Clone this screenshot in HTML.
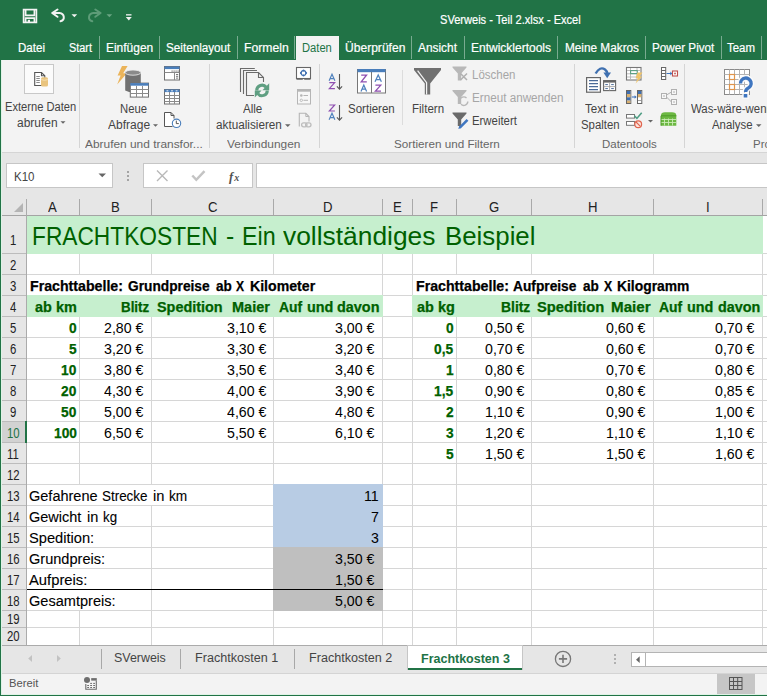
<!DOCTYPE html>
<html><head><meta charset="utf-8"><style>
html,body{margin:0;padding:0;}
body{width:767px;height:696px;position:relative;overflow:hidden;background:#fff;font-family:"Liberation Sans",sans-serif;}
.t{position:absolute;white-space:pre;transform-origin:0 0;font-family:"Liberation Sans",sans-serif;}
svg{overflow:visible}
</style></head><body>
<div style="position:absolute;left:0px;top:0px;width:767px;height:60px;background:#217346;"></div>
<div style="position:absolute;left:0px;top:60px;width:767px;height:93px;background:#f3f3f3;"></div>
<div style="position:absolute;left:0px;top:152px;width:767px;height:1px;background:#d5d5d5;"></div>
<div style="position:absolute;left:0px;top:153px;width:767px;height:63px;background:#e6e6e6;"></div>
<div style="position:absolute;left:99px;top:36px;width:1px;height:23px;background:rgba(255,255,255,0.4);"></div>
<div style="position:absolute;left:159px;top:36px;width:1px;height:23px;background:rgba(255,255,255,0.4);"></div>
<div style="position:absolute;left:237px;top:36px;width:1px;height:23px;background:rgba(255,255,255,0.4);"></div>
<div style="position:absolute;left:294px;top:36px;width:1px;height:23px;background:rgba(255,255,255,0.4);"></div>
<div style="position:absolute;left:411px;top:36px;width:1px;height:23px;background:rgba(255,255,255,0.4);"></div>
<div style="position:absolute;left:464px;top:36px;width:1px;height:23px;background:rgba(255,255,255,0.4);"></div>
<div style="position:absolute;left:557px;top:36px;width:1px;height:23px;background:rgba(255,255,255,0.4);"></div>
<div style="position:absolute;left:645px;top:36px;width:1px;height:23px;background:rgba(255,255,255,0.4);"></div>
<div style="position:absolute;left:721px;top:36px;width:1px;height:23px;background:rgba(255,255,255,0.4);"></div>
<div style="position:absolute;left:761px;top:36px;width:1px;height:23px;background:rgba(255,255,255,0.4);"></div>
<div style="position:absolute;left:296px;top:36px;width:43px;height:24px;background:#f3f3f3;"></div>
<div style="position:absolute;left:1px;top:216px;width:766px;height:429px;background:#ffffff;"></div>
<div style="position:absolute;left:27px;top:216px;width:736px;height:38px;background:#c6efce;"></div>
<div style="position:absolute;left:27px;top:296px;width:356px;height:21px;background:#c6efce;"></div>
<div style="position:absolute;left:413px;top:296px;width:350px;height:21px;background:#c6efce;"></div>
<div style="position:absolute;left:274px;top:485px;width:109px;height:63px;background:#b8cce4;"></div>
<div style="position:absolute;left:274px;top:548px;width:109px;height:63px;background:#bfbfbf;"></div>
<div style="position:absolute;left:27px;top:253px;width:740px;height:1px;background:#d6d6d6;"></div>
<div style="position:absolute;left:27px;top:274px;width:740px;height:1px;background:#d6d6d6;"></div>
<div style="position:absolute;left:27px;top:295px;width:740px;height:1px;background:#d6d6d6;"></div>
<div style="position:absolute;left:27px;top:316px;width:740px;height:1px;background:#d6d6d6;"></div>
<div style="position:absolute;left:27px;top:337px;width:740px;height:1px;background:#d6d6d6;"></div>
<div style="position:absolute;left:27px;top:358px;width:740px;height:1px;background:#d6d6d6;"></div>
<div style="position:absolute;left:27px;top:379px;width:740px;height:1px;background:#d6d6d6;"></div>
<div style="position:absolute;left:27px;top:400px;width:740px;height:1px;background:#d6d6d6;"></div>
<div style="position:absolute;left:27px;top:421px;width:740px;height:1px;background:#d6d6d6;"></div>
<div style="position:absolute;left:27px;top:442px;width:740px;height:1px;background:#d6d6d6;"></div>
<div style="position:absolute;left:27px;top:463px;width:740px;height:1px;background:#d6d6d6;"></div>
<div style="position:absolute;left:27px;top:484px;width:740px;height:1px;background:#d6d6d6;"></div>
<div style="position:absolute;left:27px;top:505px;width:740px;height:1px;background:#d6d6d6;"></div>
<div style="position:absolute;left:27px;top:526px;width:740px;height:1px;background:#d6d6d6;"></div>
<div style="position:absolute;left:27px;top:547px;width:740px;height:1px;background:#d6d6d6;"></div>
<div style="position:absolute;left:27px;top:568px;width:740px;height:1px;background:#d6d6d6;"></div>
<div style="position:absolute;left:27px;top:589px;width:740px;height:1px;background:#d6d6d6;"></div>
<div style="position:absolute;left:27px;top:610px;width:740px;height:1px;background:#d6d6d6;"></div>
<div style="position:absolute;left:27px;top:627px;width:740px;height:1px;background:#d6d6d6;"></div>
<div style="position:absolute;left:27px;top:627px;width:740px;height:1px;background:#d6d6d6;"></div>
<div style="position:absolute;left:79px;top:216px;width:1px;height:429px;background:#d6d6d6;"></div>
<div style="position:absolute;left:151px;top:216px;width:1px;height:429px;background:#d6d6d6;"></div>
<div style="position:absolute;left:273px;top:216px;width:1px;height:429px;background:#d6d6d6;"></div>
<div style="position:absolute;left:382px;top:216px;width:1px;height:429px;background:#d6d6d6;"></div>
<div style="position:absolute;left:412px;top:216px;width:1px;height:429px;background:#d6d6d6;"></div>
<div style="position:absolute;left:456px;top:216px;width:1px;height:429px;background:#d6d6d6;"></div>
<div style="position:absolute;left:531px;top:216px;width:1px;height:429px;background:#d6d6d6;"></div>
<div style="position:absolute;left:653px;top:216px;width:1px;height:429px;background:#d6d6d6;"></div>
<div style="position:absolute;left:762px;top:216px;width:1px;height:429px;background:#d6d6d6;"></div>
<div style="position:absolute;left:27px;top:275px;width:355px;height:20px;background:#ffffff;"></div>
<div style="position:absolute;left:413px;top:275px;width:349px;height:20px;background:#ffffff;"></div>
<div style="position:absolute;left:27px;top:485px;width:246px;height:20px;background:#ffffff;"></div>
<div style="position:absolute;left:27px;top:506px;width:124px;height:20px;background:#ffffff;"></div>
<div style="position:absolute;left:27px;top:527px;width:124px;height:20px;background:#ffffff;"></div>
<div style="position:absolute;left:27px;top:548px;width:124px;height:20px;background:#ffffff;"></div>
<div style="position:absolute;left:27px;top:569px;width:124px;height:20px;background:#ffffff;"></div>
<div style="position:absolute;left:27px;top:590px;width:124px;height:20px;background:#ffffff;"></div>
<div style="position:absolute;left:26px;top:215px;width:737px;height:39px;background:#c6efce;"></div>
<div style="position:absolute;left:26px;top:295px;width:357px;height:22px;background:#c6efce;"></div>
<div style="position:absolute;left:412px;top:295px;width:351px;height:22px;background:#c6efce;"></div>
<div style="position:absolute;left:273px;top:484px;width:110px;height:64px;background:#b8cce4;"></div>
<div style="position:absolute;left:273px;top:547px;width:110px;height:64px;background:#bfbfbf;"></div>
<div style="position:absolute;left:27px;top:589px;width:356px;height:1px;background:#000000;"></div>
<div style="position:absolute;left:1px;top:189px;width:766px;height:26px;background:#e6e6e6;"></div>
<div style="position:absolute;left:1px;top:216px;width:25px;height:429px;background:#e6e6e6;"></div>
<div style="position:absolute;left:1px;top:215px;width:766px;height:1px;background:#a4a4a4;"></div>
<div style="position:absolute;left:26px;top:199px;width:1px;height:446px;background:#ababab;"></div>
<div style="position:absolute;left:79px;top:199px;width:1px;height:16px;background:#a9a9a9;"></div>
<div style="position:absolute;left:151px;top:199px;width:1px;height:16px;background:#a9a9a9;"></div>
<div style="position:absolute;left:273px;top:199px;width:1px;height:16px;background:#a9a9a9;"></div>
<div style="position:absolute;left:382px;top:199px;width:1px;height:16px;background:#a9a9a9;"></div>
<div style="position:absolute;left:412px;top:199px;width:1px;height:16px;background:#a9a9a9;"></div>
<div style="position:absolute;left:456px;top:199px;width:1px;height:16px;background:#a9a9a9;"></div>
<div style="position:absolute;left:531px;top:199px;width:1px;height:16px;background:#a9a9a9;"></div>
<div style="position:absolute;left:653px;top:199px;width:1px;height:16px;background:#a9a9a9;"></div>
<div style="position:absolute;left:762px;top:199px;width:1px;height:16px;background:#a9a9a9;"></div>
<div style="position:absolute;left:1px;top:253px;width:25px;height:1px;background:#bcbcbc;"></div>
<div style="position:absolute;left:1px;top:274px;width:25px;height:1px;background:#bcbcbc;"></div>
<div style="position:absolute;left:1px;top:295px;width:25px;height:1px;background:#bcbcbc;"></div>
<div style="position:absolute;left:1px;top:316px;width:25px;height:1px;background:#bcbcbc;"></div>
<div style="position:absolute;left:1px;top:337px;width:25px;height:1px;background:#bcbcbc;"></div>
<div style="position:absolute;left:1px;top:358px;width:25px;height:1px;background:#bcbcbc;"></div>
<div style="position:absolute;left:1px;top:379px;width:25px;height:1px;background:#bcbcbc;"></div>
<div style="position:absolute;left:1px;top:400px;width:25px;height:1px;background:#bcbcbc;"></div>
<div style="position:absolute;left:1px;top:421px;width:25px;height:1px;background:#bcbcbc;"></div>
<div style="position:absolute;left:1px;top:442px;width:25px;height:1px;background:#bcbcbc;"></div>
<div style="position:absolute;left:1px;top:463px;width:25px;height:1px;background:#bcbcbc;"></div>
<div style="position:absolute;left:1px;top:484px;width:25px;height:1px;background:#bcbcbc;"></div>
<div style="position:absolute;left:1px;top:505px;width:25px;height:1px;background:#bcbcbc;"></div>
<div style="position:absolute;left:1px;top:526px;width:25px;height:1px;background:#bcbcbc;"></div>
<div style="position:absolute;left:1px;top:547px;width:25px;height:1px;background:#bcbcbc;"></div>
<div style="position:absolute;left:1px;top:568px;width:25px;height:1px;background:#bcbcbc;"></div>
<div style="position:absolute;left:1px;top:589px;width:25px;height:1px;background:#bcbcbc;"></div>
<div style="position:absolute;left:1px;top:610px;width:25px;height:1px;background:#bcbcbc;"></div>
<div style="position:absolute;left:1px;top:627px;width:25px;height:1px;background:#bcbcbc;"></div>
<div style="position:absolute;left:1px;top:645px;width:25px;height:1px;background:#bcbcbc;"></div>
<div style="position:absolute;left:1px;top:645px;width:766px;height:1px;background:#ababab;"></div>
<svg style="position:absolute;left:14px;top:203px" width="10" height="10"><polygon points="9,0 9,9 0,9" fill="#b4b4b4"/></svg>
<div style="position:absolute;left:1px;top:422px;width:24px;height:20px;background:#d2d2d2;"></div>
<div style="position:absolute;left:25px;top:421px;width:2px;height:22px;background:#217346;"></div>
<svg style="position:absolute;left:0;top:0" width="140" height="35">
<g fill="none" stroke="#f4f4f4" stroke-width="1.7">
<rect x="23.6" y="9.6" width="12.8" height="12.8"/>
<path d="M25.6 9.6 V15.3 H34.4 V9.6"/>
<path d="M25.6 22.4 V18.2 H34.4 V22.4"/>
</g>
<rect x="27.8" y="19.8" width="2.2" height="3" fill="#f4f4f4"/>
<g fill="none" stroke="#f2f2f2" stroke-width="2" stroke-linecap="round" stroke-linejoin="round">
<path d="M53 13 H59.5 A5 4.3 0 0 1 60.5 21.3"/>
<path d="M57.5 9.5 L52.2 13 L57.5 16.8"/>
</g>
<polygon points="71.5,14.3 77.2,14.3 74.35,17.2" fill="#f2f2f2"/>
<g fill="none" stroke="#5d9c78" stroke-width="2" stroke-linecap="round" stroke-linejoin="round">
<path d="M99.8 13 H93.3 A5 4.3 0 0 0 92.3 21.3"/>
<path d="M95.3 9.5 L100.6 13 L95.3 16.8"/>
</g>
<polygon points="106.5,14.3 112.2,14.3 109.35,17.2" fill="#6aa583"/>
<rect x="126" y="14.2" width="5.5" height="1.3" fill="#f2f2f2"/>
<polygon points="125.8,17 131.8,17 128.8,20.6" fill="#f2f2f2"/>
</svg>
<div style="position:absolute;left:79px;top:64px;width:1px;height:84px;background:#d5d5d5;"></div>
<div style="position:absolute;left:209px;top:64px;width:1px;height:84px;background:#d5d5d5;"></div>
<div style="position:absolute;left:319px;top:64px;width:1px;height:84px;background:#d5d5d5;"></div>
<div style="position:absolute;left:574px;top:64px;width:1px;height:84px;background:#d5d5d5;"></div>
<div style="position:absolute;left:684px;top:64px;width:1px;height:84px;background:#d5d5d5;"></div>
<div style="position:absolute;left:402px;top:70px;width:1px;height:55px;background:#dcdcdc;"></div>
<svg style="position:absolute;left:0;top:0;overflow:visible" width="1" height="1"><polygon points="60.5,121.2 65.5,121.2 63.0,123.7" fill="#666"/></svg>
<svg style="position:absolute;left:0;top:0;overflow:visible" width="1" height="1"><polygon points="153,124.3 158,124.3 155.5,126.8" fill="#666"/></svg>
<svg style="position:absolute;left:0;top:0;overflow:visible" width="1" height="1"><polygon points="285,124.3 290.5,124.3 287.75,127.05" fill="#666"/></svg>
<svg style="position:absolute;left:0;top:0;overflow:visible" width="1" height="1"><polygon points="648,120 653,120 650.5,122.5" fill="#666"/></svg>
<svg style="position:absolute;left:0;top:0;overflow:visible" width="1" height="1"><polygon points="756,124.3 761.5,124.3 758.75,127.05" fill="#666"/></svg>
<svg style="position:absolute;left:0;top:0" width="767" height="153">
<!-- Externe Daten box -->
<rect x="24.5" y="64.5" width="29" height="29" fill="#fbfbfb" stroke="#c8c8c8"/>
<path d="M34.7 72.5 H41.5 L44.8 75.8 V85.5 H34.7 Z" fill="#fff" stroke="#555" stroke-width="1.1"/>
<path d="M41.5 72.5 V75.8 H44.8" fill="none" stroke="#555" stroke-width="1.1"/>
<g stroke="#8a8a8a" stroke-width="1"><path d="M36.3 76.5h3.5M36.3 78.5h3.5M36.3 80.5h3.5M36.3 82.5h3.5"/></g>
<rect x="41" y="77.3" width="7" height="9.3" rx="1.5" fill="#e9c47f"/>
<path d="M41.2 79.6 Q44.5 81 47.8 79.6" stroke="#f6e2b8" stroke-width="0.9" fill="none"/>
<!-- Neue Abfrage -->
<path d="M122 66 L127.6 66 L123.2 73.2 L126.8 73.2 L117.2 84.6 L120.6 75.6 L117.6 75.6 Z" fill="#ebb45a"/>
<path d="M125.2 72.5 V90.5 Q132.9 94.5 140.8 90.5 V72.5 Z" fill="#717171"/>
<ellipse cx="133" cy="72.6" rx="7.8" ry="2.6" fill="#8a8a8a" stroke="#f0f0f0" stroke-width="0.8"/>
<rect x="130.3" y="83.1" width="18.2" height="14" fill="#fff" stroke="#6f6f6f"/>
<rect x="130.3" y="83.1" width="18.2" height="2.6" fill="#4a7ebb"/>
<g stroke="#8a8a8a" stroke-width="1"><path d="M130.5 89.5h18M130.5 93.5h18M136.5 86v11M142.5 86v11"/></g>
<!-- small icons col 1 -->
<rect x="164.5" y="66.5" width="15" height="13.5" fill="#fff" stroke="#6f6f6f"/>
<rect x="164.5" y="66.5" width="15" height="2.6" fill="#4a7ebb"/>
<g fill="#777"><rect x="171.5" y="70.5" width="1.2" height="1.2"/><rect x="173.5" y="70.5" width="1.2" height="1.2"/><rect x="175.5" y="70.5" width="1.2" height="1.2"/><rect x="177.5" y="70.5" width="1.2" height="1.2"/>
<rect x="176" y="74" width="2.2" height="1"/><rect x="176" y="75.8" width="2.2" height="1"/><rect x="176" y="77.6" width="2.2" height="1"/></g>
<path d="M164.5 72.5h15M174.5 72.5v7.5" stroke="#8a8a8a"/>
<rect x="164.5" y="89.5" width="15" height="14.5" fill="#fff" stroke="#6f6f6f"/>
<rect x="164.5" y="89.5" width="15" height="2.6" fill="#4a7ebb"/>
<g fill="#fff"><rect x="166.5" y="90.4" width="1.8" height="0.9"/><rect x="171.1" y="90.4" width="1.8" height="0.9"/><rect x="175.7" y="90.4" width="1.8" height="0.9"/></g>
<g stroke="#8a8a8a"><path d="M164.5 95.5h15M164.5 98.5h15M164.5 101.5h15M169.5 92v12M174.5 92v12"/></g>
<path d="M172.5 126.5 H164.5 V112.5 H171 L174 115.5 V118.5" fill="#fff" stroke="#555"/>
<path d="M171 112.5 V115.5 H174" fill="none" stroke="#555"/>
<circle cx="176.5" cy="123.3" r="4.2" fill="#fff" stroke="#4a7ebb" stroke-width="1.1"/>
<path d="M176.3 120.6 V123.6 H178.8" fill="none" stroke="#555" stroke-width="1"/>
<!-- Alle aktualisieren -->
<g fill="none" stroke="#6b6b6b" stroke-width="1.1">
<path d="M240.5 92 V68.5 H254.8"/>
<path d="M243.5 94 V70.5 H257"/>
<path d="M254 95.5 H246.5 V72.5 H258.5 L263.5 77.5 V82"/>
<path d="M258.5 72.5 V77.5 H263.5"/>
</g>

<g fill="none" stroke="#5f9f82" stroke-width="3.1">
<path d="M256.7 90.4 A5.3 5.3 0 0 1 266.2 87.2"/>
<path d="M267.3 90.4 A5.3 5.3 0 0 1 257.8 93.6"/>
</g>
<polygon points="269.2,83.2 269.2,90.2 262.4,90.2" fill="#5f9f82"/>
<polygon points="254.8,97.6 254.8,90.6 261.6,90.6" fill="#5f9f82"/>
<!-- small icons col Verbindungen -->
<rect x="296.5" y="67.5" width="14" height="11" fill="#fff" stroke="#666" stroke-width="1.1"/>
<path d="M296.5 79.3h6.3M304.2 79.3h6.3" stroke="#666" stroke-width="1.1"/>
<circle cx="303.5" cy="73" r="2.4" fill="none" stroke="#3f6fb0" stroke-width="1.1"/>
<g fill="#3f6fb0"><circle cx="303.5" cy="70.4" r="1"/><circle cx="303.5" cy="75.6" r="1"/><circle cx="300.9" cy="73" r="1"/><circle cx="306.1" cy="73" r="1"/></g>
<rect x="297.5" y="89.5" width="13" height="14.5" fill="#f7f7f7" stroke="#b5b5b5"/>
<rect x="297.5" y="89.5" width="13" height="2.2" fill="#b5b5b5"/>
<circle cx="301.3" cy="95.5" r="1.3" fill="#b5b5b5"/><circle cx="301.3" cy="100.3" r="1.2" fill="none" stroke="#b5b5b5" stroke-width="0.9"/>
<path d="M303.5 95.5h4.5M303.5 100.3h4.5" stroke="#b5b5b5"/>
<path d="M299.3 126.5 V113.3 H305.8 L309 116.5 V121.5" fill="none" stroke="#b5b5b5" stroke-width="1.1"/>
<path d="M305.8 113.3 V116.5 H309" fill="none" stroke="#b5b5b5"/>
<g fill="none" stroke="#bdbdbd" stroke-width="1.3"><rect x="301.6" y="122.8" width="5.4" height="4" rx="2"/><rect x="305.6" y="122.8" width="5.4" height="4" rx="2"/></g>
<!-- sort AZ / ZA -->
<g fill="none" stroke-width="1.15" stroke-linejoin="miter">
<path d="M329.1 80.8 L332 74.2 L334.9 80.8 M330.2 78.6 H333.8" stroke="#4f81bd"/>
<path d="M329.3 82.6 H334.7 L329.3 88.6 H334.9" stroke="#8e4fb0"/>
<path d="M329.3 105 H334.7 L329.3 111 H334.9" stroke="#8e4fb0"/>
<path d="M329.1 119.8 L332 113.2 L334.9 119.8 M330.2 117.6 H333.8" stroke="#4f81bd"/>
</g>
<g stroke="#555" stroke-width="1.1" fill="none"><path d="M339.5 74v15M336.9 86.3l2.6 2.8 2.6-2.8"/><path d="M339.5 105v15M336.9 117.3l2.6 2.8 2.6-2.8"/></g>
<!-- sort dialog -->
<rect x="357.5" y="69.5" width="28" height="23.5" fill="#fff" stroke="#777"/>
<rect x="357.5" y="69" width="28" height="3.2" fill="#4a7ebb"/>
<path d="M371.5 72v21" stroke="#777"/>
<g fill="none" stroke-width="1.25">
<path d="M361.2 75 H366.6 L361.2 81.8 H366.8" stroke="#8e4fb0"/>
<path d="M361 91.4 L363.8 85 L366.6 91.4 M362 89.2 H365.6" stroke="#4f81bd"/>
<path d="M375 81.8 L378.2 75 L381.4 81.8 M376 79.6 H380.4" stroke="#4f81bd"/>
<path d="M375.4 85.2 H380.8 L375.4 91.2 H381" stroke="#8e4fb0"/>
</g>
<!-- Filter funnel -->
<path d="M414 68 H441 V70 L430.2 83.5 V94.6 H424.8 V83.5 L414 70 Z" fill="#707070"/>
<path d="M417.6 70.6 L426.6 82.6 V94.6" fill="none" stroke="#f3f3f3" stroke-width="1.2"/>
<!-- small filter icons -->
<path d="M452.5 66.5 H466.5 V67.5 L461.2 73.5 V80.5 H457.8 V73.5 L452.5 67.5 Z" fill="#b8b8b8"/>
<path d="M460.5 73.5l6.5 6.5M467 73.5l-6.5 6.5" stroke="#b0b0b0" stroke-width="1.5"/>
<path d="M452.5 90 H466.5 V91 L461.2 97 V104 H457.8 V97 L452.5 91 Z" fill="#b8b8b8"/>
<g fill="none" stroke="#b8b8b8" stroke-width="1.4"><path d="M459.8 100.5 A4 4 0 0 1 466.5 98"/><path d="M467.8 101.5 A4 4 0 0 1 461 104.3"/></g>
<path d="M452.5 112.5 H466.5 V113.5 L461.2 119.5 V126 H457.8 V119.5 L452.5 113.5 Z" fill="#6a6a6a"/>
<path d="M459.8 127.6 L467.5 119.9" stroke="#3f76c0" stroke-width="2.6"/>
<path d="M458.3 129.1 l1-3 2 2z" fill="#3f76c0"/>
<!-- Text in Spalten -->
<path d="M595.6 73.5 Q600 66 605 69.5 Q607 71 607.3 73.5" fill="none" stroke="#3f70b0" stroke-width="2.4"/>
<polygon points="603.4,72.4 611,72.4 607.2,78.2" fill="#3f70b0"/>
<rect x="586.6" y="77.6" width="13.8" height="14.6" fill="#fff" stroke="#666" stroke-width="1.2"/>
<g stroke="#4a6a98" stroke-width="1.1"><path d="M589 80.6h9M589 83.6h9M589 86.6h9M589 89.6h9"/></g>
<rect x="603.6" y="80.6" width="12" height="10" fill="#fff" stroke="#666" stroke-width="1.1"/>
<rect x="603.6" y="80.6" width="12" height="2" fill="#666"/>
<path d="M609.6 82.6v8M603.6 86.6h12" stroke="#999" stroke-width="0.8"/>
<g stroke="#4a6a98" stroke-width="1"><path d="M605.3 84.6h2.6M611.2 84.6h2.6M605.3 88.6h2.6M611.2 88.6h2.6"/></g>
<!-- Datentools small col1 -->
<rect x="626.5" y="67.5" width="14.5" height="12.5" fill="#fff" stroke="#777" stroke-width="1.1"/>
<g stroke="#b5b5b5" stroke-width="0.9"><path d="M627 70.5h13.5M627 73.8h13.5M627 77h13.5M630.5 68v12M637 68v12"/></g>
<rect x="630.6" y="70.6" width="6.6" height="3" fill="#fff" stroke="#5a9e80" stroke-width="1.1"/>
<path d="M637.5 72.5 L642.5 72.5 L639.6 76.6 L642.2 76.6 L635.6 83.4 L637.8 78.2 L635.6 78.2 Z" fill="#f0c56a"/>
<rect x="626.5" y="90.5" width="4.3" height="13" fill="#fff" stroke="#666"/>
<rect x="627" y="91" width="3.3" height="3" fill="#3f6fb0"/><rect x="627" y="94" width="3.3" height="3.3" fill="#d9b070"/><rect x="627" y="97.3" width="3.3" height="3.3" fill="#3f6fb0"/><rect x="627" y="100.6" width="3.3" height="2.4" fill="#d9b070"/>
<rect x="637.5" y="90.5" width="4.3" height="13" fill="#fff" stroke="#666"/>
<rect x="638" y="91" width="3.3" height="3" fill="#3f6fb0"/><rect x="638" y="94" width="3.3" height="3.3" fill="#d9b070"/>
<path d="M638 100.5h3.3" stroke="#888" stroke-width="0.8"/>
<path d="M631.8 97h4.2" stroke="#3f76c0" stroke-width="1.1"/><polygon points="634.6,95.2 636.6,97 634.6,98.8" fill="#3f76c0"/>
<rect x="626.5" y="114.5" width="8" height="3.6" fill="#fff" stroke="#777"/>
<rect x="626.5" y="121.5" width="8" height="3.8" fill="#fff" stroke="#777"/>
<path d="M634.3 115.8l2.6 2.6 4.8-5.6" stroke="#4f9e84" stroke-width="1.6" fill="none"/>
<circle cx="638.2" cy="124.2" r="3.4" fill="#fbe3dc" stroke="#e0654f" stroke-width="1.2"/>
<path d="M636 122l4.4 4.4" stroke="#e0654f" stroke-width="1.1"/>
<!-- col2 -->
<rect x="661.5" y="67.5" width="4.2" height="12" fill="#fff" stroke="#666"/>
<path d="M661.5 70.5h4.2M661.5 73.5h4.2M661.5 76.5h4.2" stroke="#666"/>
<path d="M666.5 73.5h4.5" stroke="#3f76c0"/><polygon points="670.3,71.6 672.3,73.5 670.3,75.4" fill="#3f76c0"/>
<rect x="672.5" y="71" width="5" height="5" fill="#fff" stroke="#c0504d" stroke-width="1.1"/>
<rect x="674.2" y="72.7" width="1.6" height="1.6" fill="#c0504d"/>
<g fill="#f7f7f7" stroke="#b0b0b0"><rect x="661.5" y="93.5" width="5" height="5"/><rect x="671.5" y="89.5" width="5" height="5"/><rect x="671.5" y="99.5" width="5" height="5"/></g>
<path d="M663 96h2M673 92h2M673 102h2" stroke="#b0b0b0"/>
<path d="M666.5 95l5-3M666.5 97l5 5" stroke="#b0b0b0" fill="none"/>
<path d="M661 115.5 Q661 112.2 665 112.2 H672 Q676.3 112.2 676.3 115.5 V125.7 H661 Z" fill="#6cb842"/>
<path d="M661 125.7 V115.8 H676.3" fill="none" stroke="#4e9a2a" stroke-width="1"/>
<g stroke="#c9eab5" stroke-width="0.9"><path d="M664.5 118.5v7M668.5 118.5v7M672.5 118.5v7M661.5 119.5h14.5M661.5 122.5h14.5"/></g>
<!-- What-if -->
<rect x="724.5" y="69.5" width="25" height="25" fill="#fff" stroke="#8a8a8a"/>
<g stroke="#b4b4b4"><path d="M724.5 74.5h25M724.5 79.5h25M724.5 84.5h25M724.5 89.5h25M729.5 69.5v25M734.5 69.5v25M739.5 69.5v25M744.5 69.5v25"/></g>
<rect x="729.5" y="74.5" width="5" height="5" fill="#fff" stroke="#e0944a" stroke-width="1.2"/>
<rect x="729.5" y="84.5" width="5" height="5" fill="#fff" stroke="#e0944a" stroke-width="1.2"/>
<path d="M740.5 83.5 A5.3 5.3 0 1 1 748 88.2 Q745.6 89.5 745.6 92" fill="none" stroke="#fafafa" stroke-width="6.2"/><rect x="742.3" y="92.7" width="6.6" height="6.2" fill="#fafafa"/><path d="M740.5 83.5 A5.3 5.3 0 1 1 748 88.2 Q745.6 89.5 745.6 92" fill="none" stroke="#3f76c0" stroke-width="3.4"/><rect x="743.7" y="94" width="3.6" height="3.5" fill="#3f76c0"/>
</svg>
<div style="position:absolute;left:6px;top:163px;width:107px;height:25px;background:#c6c6c6;"></div>
<div style="position:absolute;left:7px;top:164px;width:105px;height:23px;background:#ffffff;"></div>
<svg style="position:absolute;left:0;top:0;overflow:visible" width="1" height="1"><polygon points="98.5,173.5 106,173.5 102.25,177.25" fill="#666"/></svg>
<div style="position:absolute;left:127px;top:171px;width:2px;height:2px;background:#a4a4a4;"></div>
<div style="position:absolute;left:127px;top:175px;width:2px;height:2px;background:#a4a4a4;"></div>
<div style="position:absolute;left:127px;top:179px;width:2px;height:2px;background:#a4a4a4;"></div>
<div style="position:absolute;left:143px;top:163px;width:110px;height:25px;background:#c6c6c6;"></div>
<div style="position:absolute;left:144px;top:164px;width:108px;height:23px;background:#ffffff;"></div>
<svg style="position:absolute;left:0;top:0" width="767" height="200">
<path d="M157 170.5l10.5 10.5M167.5 170.5L157 181" stroke="#b8b8b8" stroke-width="1.4"/>
<path d="M192.3 175.5l4 4.3 8.2-8.6" stroke="#c4c4c4" stroke-width="2.5" fill="none"/>
<text x="229" y="180.5" font-family="Liberation Serif" font-style="italic" font-weight="bold" font-size="12.5" fill="#505050">f</text>
<text x="234.3" y="180.8" font-family="Liberation Serif" font-style="italic" font-weight="bold" font-size="10" fill="#505050">x</text>
</svg>
<div style="position:absolute;left:256px;top:163px;width:511px;height:25px;background:#c6c6c6;"></div>
<div style="position:absolute;left:257px;top:164px;width:510px;height:23px;background:#ffffff;"></div>
<div style="position:absolute;left:1px;top:646px;width:766px;height:27px;background:#e6e6e6;"></div>
<div style="position:absolute;left:1px;top:673px;width:766px;height:1px;background:#d4d4d4;"></div>
<svg style="position:absolute;left:0;top:0;overflow:visible" width="1" height="1"><polygon points="0,0 0,0 0.0,0.0" fill="none"/></svg>
<svg style="position:absolute;left:0;top:640" width="767" height="56">
<polygon points="32,15 32,22 28.2,18.5" fill="#c2c2c2"/>
<polygon points="57,15 57,22 60.8,18.5" fill="#c2c2c2"/>
<circle cx="563" cy="18.9" r="7.6" fill="none" stroke="#777" stroke-width="1.3"/>
<path d="M563 14.8v8.2M558.9 18.9h8.2" stroke="#777" stroke-width="1.6"/>
</svg>
<div style="position:absolute;left:101px;top:649px;width:1px;height:20px;background:#a8a8a8;"></div>
<div style="position:absolute;left:180px;top:649px;width:1px;height:20px;background:#a8a8a8;"></div>
<div style="position:absolute;left:294px;top:649px;width:1px;height:20px;background:#a8a8a8;"></div>
<div style="position:absolute;left:407px;top:645px;width:116px;height:25px;background:#c6c6c6;"></div>
<div style="position:absolute;left:408px;top:646px;width:114px;height:24px;background:#ffffff;"></div>
<div style="position:absolute;left:408px;top:668px;width:114px;height:2px;background:#217346;"></div>
<div style="position:absolute;left:614px;top:654px;width:2px;height:2px;background:#b0b0b0;"></div>
<div style="position:absolute;left:614px;top:658px;width:2px;height:2px;background:#b0b0b0;"></div>
<div style="position:absolute;left:614px;top:662px;width:2px;height:2px;background:#b0b0b0;"></div>
<div style="position:absolute;left:631px;top:652px;width:136px;height:15px;background:#b4b4b4;"></div>
<div style="position:absolute;left:632px;top:653px;width:135px;height:13px;background:#ffffff;"></div>
<div style="position:absolute;left:645px;top:653px;width:1px;height:13px;background:#b4b4b4;"></div>
<svg style="position:absolute;left:0;top:0" width="767" height="696"><polygon points="639.7,656.3 639.7,663 636,659.65" fill="#666"/></svg>
<div style="position:absolute;left:1px;top:674px;width:766px;height:21px;background:#f3f3f3;"></div>
<svg style="position:absolute;left:0;top:0" width="767" height="696">
<circle cx="87" cy="680" r="3" fill="#6e6e6e"/>
<rect x="91.2" y="678.1" width="5.6" height="2.5" fill="#6e6e6e"/>
<path d="M85.8 684 V689.3 H96.3 V680.5" fill="none" stroke="#6e6e6e" stroke-width="1.1"/>
<g fill="#6e6e6e"><rect x="90.2" y="682.9" width="1.8" height="1"/><rect x="93.2" y="682.9" width="1.8" height="1"/>
<rect x="87.2" y="685" width="1.8" height="1"/><rect x="90.2" y="685" width="1.8" height="1"/><rect x="93.2" y="685" width="1.8" height="1"/>
<rect x="87.2" y="687" width="1.8" height="1"/><rect x="90.2" y="687" width="1.8" height="1"/><rect x="93.2" y="687" width="1.8" height="1"/></g>
</svg>
<div style="position:absolute;left:717px;top:674px;width:38px;height:21px;background:#c6c6c6;"></div>
<svg style="position:absolute;left:0;top:0" width="767" height="696">
<rect x="729.5" y="677.5" width="12.5" height="12" fill="none" stroke="#555" stroke-width="1"/>
<path d="M733.5 677.5v12M737.7 677.5v12M729.5 681.5h12.5M729.5 685.5h12.5" stroke="#555"/>
</svg>
<div style="position:absolute;left:1px;top:60px;width:1px;height:635px;background:#dff3e6;"></div>
<div style="position:absolute;left:1px;top:694px;width:766px;height:1px;background:#dff3e6;"></div>
<div style="position:absolute;left:0px;top:0px;width:1px;height:696px;background:#217346;"></div>
<div style="position:absolute;left:0px;top:695px;width:767px;height:1px;background:#217346;"></div>
<div class="t" style="left:440.00px;top:14.00px;font-size:12px;line-height:12px;color:#ffffff;-webkit-text-stroke:0.2px #ffffff;transform:scaleX(0.9228)">SVerweis - Teil 2.xlsx - Excel</div>
<div class="t" style="left:17.50px;top:42.00px;font-size:12px;line-height:12px;color:#ffffff;-webkit-text-stroke:0.2px #ffffff;transform:scaleX(0.9617)">Datei</div>
<div class="t" style="left:69.00px;top:42.00px;font-size:12px;line-height:12px;color:#ffffff;-webkit-text-stroke:0.2px #ffffff;transform:scaleX(0.9074)">Start</div>
<div class="t" style="left:106.00px;top:42.00px;font-size:12px;line-height:12px;color:#ffffff;-webkit-text-stroke:0.2px #ffffff;transform:scaleX(0.9957)">Einfügen</div>
<div class="t" style="left:166.00px;top:42.00px;font-size:12px;line-height:12px;color:#ffffff;-webkit-text-stroke:0.2px #ffffff;transform:scaleX(0.9743)">Seitenlayout</div>
<div class="t" style="left:244.00px;top:42.00px;font-size:12px;line-height:12px;color:#ffffff;-webkit-text-stroke:0.2px #ffffff;transform:scaleX(1.0153)">Formeln</div>
<div class="t" style="left:345.00px;top:42.00px;font-size:12px;line-height:12px;color:#ffffff;-webkit-text-stroke:0.2px #ffffff;transform:scaleX(1.0057)">Überprüfen</div>
<div class="t" style="left:418.00px;top:42.00px;font-size:12px;line-height:12px;color:#ffffff;-webkit-text-stroke:0.2px #ffffff;transform:scaleX(0.9896)">Ansicht</div>
<div class="t" style="left:471.00px;top:42.00px;font-size:12px;line-height:12px;color:#ffffff;-webkit-text-stroke:0.2px #ffffff;transform:scaleX(0.9997)">Entwicklertools</div>
<div class="t" style="left:565.00px;top:42.00px;font-size:12px;line-height:12px;color:#ffffff;-webkit-text-stroke:0.2px #ffffff;transform:scaleX(0.9820)">Meine Makros</div>
<div class="t" style="left:652.00px;top:42.00px;font-size:12px;line-height:12px;color:#ffffff;-webkit-text-stroke:0.2px #ffffff;transform:scaleX(0.9739)">Power Pivot</div>
<div class="t" style="left:727.40px;top:42.00px;font-size:12px;line-height:12px;color:#ffffff;-webkit-text-stroke:0.2px #ffffff;transform:scaleX(0.9541)">Team</div>
<div class="t" style="left:301.90px;top:42.00px;font-size:12px;line-height:12px;color:#217346;transform:scaleX(0.9315)">Daten</div>
<div class="t" style="left:48.30px;top:200.00px;font-size:14px;line-height:14px;color:#222222;transform:scaleX(0.9400)">A</div>
<div class="t" style="left:110.80px;top:200.00px;font-size:14px;line-height:14px;color:#222222;transform:scaleX(0.9400)">B</div>
<div class="t" style="left:207.80px;top:200.00px;font-size:14px;line-height:14px;color:#222222;transform:scaleX(0.9400)">C</div>
<div class="t" style="left:322.83px;top:200.00px;font-size:14px;line-height:14px;color:#222222;transform:scaleX(0.9400)">D</div>
<div class="t" style="left:392.80px;top:200.00px;font-size:14px;line-height:14px;color:#222222;transform:scaleX(0.9400)">E</div>
<div class="t" style="left:430.27px;top:200.00px;font-size:14px;line-height:14px;color:#222222;transform:scaleX(0.9400)">F</div>
<div class="t" style="left:489.30px;top:200.00px;font-size:14px;line-height:14px;color:#222222;transform:scaleX(0.9400)">G</div>
<div class="t" style="left:587.80px;top:200.00px;font-size:14px;line-height:14px;color:#222222;transform:scaleX(0.9400)">H</div>
<div class="t" style="left:706.12px;top:200.00px;font-size:14px;line-height:14px;color:#222222;transform:scaleX(0.9400)">I</div>
<div class="t" style="left:9.85px;top:233.00px;font-size:14px;line-height:14px;color:#222222;transform:scaleX(0.8116)">1</div>
<div class="t" style="left:10.25px;top:258.00px;font-size:14px;line-height:14px;color:#222222;transform:scaleX(0.8116)">2</div>
<div class="t" style="left:10.25px;top:279.00px;font-size:14px;line-height:14px;color:#222222;transform:scaleX(0.8116)">3</div>
<div class="t" style="left:10.25px;top:300.00px;font-size:14px;line-height:14px;color:#222222;transform:scaleX(0.8116)">4</div>
<div class="t" style="left:10.25px;top:321.00px;font-size:14px;line-height:14px;color:#222222;transform:scaleX(0.8116)">5</div>
<div class="t" style="left:10.25px;top:342.00px;font-size:14px;line-height:14px;color:#222222;transform:scaleX(0.8116)">6</div>
<div class="t" style="left:10.25px;top:363.00px;font-size:14px;line-height:14px;color:#222222;transform:scaleX(0.8116)">7</div>
<div class="t" style="left:10.25px;top:384.00px;font-size:14px;line-height:14px;color:#222222;transform:scaleX(0.8116)">8</div>
<div class="t" style="left:10.25px;top:405.00px;font-size:14px;line-height:14px;color:#222222;transform:scaleX(0.8116)">9</div>
<div class="t" style="left:6.69px;top:426.00px;font-size:14px;line-height:14px;color:#217346;transform:scaleX(0.8116)">10</div>
<div class="t" style="left:7.11px;top:447.00px;font-size:14px;line-height:14px;color:#222222;transform:scaleX(0.8116)">11</div>
<div class="t" style="left:6.69px;top:468.00px;font-size:14px;line-height:14px;color:#222222;transform:scaleX(0.8116)">12</div>
<div class="t" style="left:6.69px;top:489.00px;font-size:14px;line-height:14px;color:#222222;transform:scaleX(0.8116)">13</div>
<div class="t" style="left:6.69px;top:510.00px;font-size:14px;line-height:14px;color:#222222;transform:scaleX(0.8116)">14</div>
<div class="t" style="left:6.69px;top:531.00px;font-size:14px;line-height:14px;color:#222222;transform:scaleX(0.8116)">15</div>
<div class="t" style="left:6.69px;top:552.00px;font-size:14px;line-height:14px;color:#222222;transform:scaleX(0.8116)">16</div>
<div class="t" style="left:6.69px;top:573.00px;font-size:14px;line-height:14px;color:#222222;transform:scaleX(0.8116)">17</div>
<div class="t" style="left:6.69px;top:594.00px;font-size:14px;line-height:14px;color:#222222;transform:scaleX(0.8116)">18</div>
<div class="t" style="left:6.69px;top:612.00px;font-size:14px;line-height:14px;color:#222222;transform:scaleX(0.8116)">19</div>
<div class="t" style="left:7.09px;top:629.00px;font-size:14px;line-height:14px;color:#222222;transform:scaleX(0.8116)">20</div>
<div class="t" style="left:31.78px;top:224.00px;font-size:25px;line-height:25px;color:#006100;transform:scaleX(0.9089)">FRACHTKOSTEN</div>
<div class="t" style="left:225.51px;top:224.00px;font-size:25px;line-height:25px;color:#006100;transform:scaleX(0.9902)">-</div>
<div class="t" style="left:241.93px;top:224.00px;font-size:25px;line-height:25px;color:#006100;transform:scaleX(0.9329)">Ein</div>
<div class="t" style="left:283.00px;top:224.00px;font-size:25px;line-height:25px;color:#006100;transform:scaleX(1.0546)">vollständiges</div>
<div class="t" style="left:444.73px;top:224.00px;font-size:25px;line-height:25px;color:#006100;transform:scaleX(1.0334)">Beispiel</div>
<div class="t" style="left:29.90px;top:279.00px;font-size:14px;line-height:14px;color:#000000;font-weight:bold;-webkit-text-stroke:0.25px #000000;transform:scaleX(1.0128)">Frachttabelle:</div>
<div class="t" style="left:128.00px;top:279.00px;font-size:14px;line-height:14px;color:#000000;font-weight:bold;-webkit-text-stroke:0.25px #000000;transform:scaleX(0.9802)">Grundpreise</div>
<div class="t" style="left:215.60px;top:279.00px;font-size:14px;line-height:14px;color:#000000;font-weight:bold;-webkit-text-stroke:0.25px #000000;transform:scaleX(0.9692)">ab</div>
<div class="t" style="left:236.20px;top:279.00px;font-size:14px;line-height:14px;color:#000000;font-weight:bold;-webkit-text-stroke:0.25px #000000;transform:scaleX(0.8600)">X</div>
<div class="t" style="left:250.10px;top:279.00px;font-size:14px;line-height:14px;color:#000000;font-weight:bold;-webkit-text-stroke:0.25px #000000;transform:scaleX(1.0088)">Kilometer</div>
<div class="t" style="left:415.90px;top:279.00px;font-size:14px;line-height:14px;color:#000000;font-weight:bold;-webkit-text-stroke:0.25px #000000;transform:scaleX(1.0128)">Frachttabelle:</div>
<div class="t" style="left:513.40px;top:279.00px;font-size:14px;line-height:14px;color:#000000;font-weight:bold;-webkit-text-stroke:0.25px #000000;transform:scaleX(0.9817)">Aufpreise</div>
<div class="t" style="left:582.90px;top:279.00px;font-size:14px;line-height:14px;color:#000000;font-weight:bold;-webkit-text-stroke:0.25px #000000;transform:scaleX(0.9692)">ab</div>
<div class="t" style="left:603.60px;top:279.00px;font-size:14px;line-height:14px;color:#000000;font-weight:bold;-webkit-text-stroke:0.25px #000000;transform:scaleX(0.8700)">X</div>
<div class="t" style="left:617.30px;top:279.00px;font-size:14px;line-height:14px;color:#000000;font-weight:bold;-webkit-text-stroke:0.25px #000000;transform:scaleX(0.9907)">Kilogramm</div>
<div class="t" style="left:35.40px;top:300.00px;font-size:14px;line-height:14px;color:#006100;font-weight:bold;-webkit-text-stroke:0.25px #006100;transform:scaleX(1.0321)">ab km</div>
<div class="t" style="left:121.00px;top:300.00px;font-size:14px;line-height:14px;color:#006100;font-weight:bold;-webkit-text-stroke:0.25px #006100;transform:scaleX(0.9543)">Blitz</div>
<div class="t" style="left:156.90px;top:300.00px;font-size:14px;line-height:14px;color:#006100;font-weight:bold;-webkit-text-stroke:0.25px #006100;transform:scaleX(1.0297)">Spedition</div>
<div class="t" style="left:232.00px;top:300.00px;font-size:14px;line-height:14px;color:#006100;font-weight:bold;-webkit-text-stroke:0.25px #006100;transform:scaleX(1.0371)">Maier</div>
<div class="t" style="left:278.60px;top:300.00px;font-size:14px;line-height:14px;color:#006100;font-weight:bold;-webkit-text-stroke:0.25px #006100;transform:scaleX(0.9931)">Auf</div>
<div class="t" style="left:306.80px;top:300.00px;font-size:14px;line-height:14px;color:#006100;font-weight:bold;-webkit-text-stroke:0.25px #006100;transform:scaleX(1.0277)">und</div>
<div class="t" style="left:337.30px;top:300.00px;font-size:14px;line-height:14px;color:#006100;font-weight:bold;-webkit-text-stroke:0.25px #006100;transform:scaleX(1.0301)">davon</div>
<div class="t" style="left:417.00px;top:300.00px;font-size:14px;line-height:14px;color:#006100;font-weight:bold;-webkit-text-stroke:0.25px #006100;transform:scaleX(1.0329)">ab kg</div>
<div class="t" style="left:500.80px;top:300.00px;font-size:14px;line-height:14px;color:#006100;font-weight:bold;-webkit-text-stroke:0.25px #006100;transform:scaleX(0.9915)">Blitz</div>
<div class="t" style="left:536.60px;top:300.00px;font-size:14px;line-height:14px;color:#006100;font-weight:bold;-webkit-text-stroke:0.25px #006100;transform:scaleX(1.0535)">Spedition</div>
<div class="t" style="left:611.00px;top:300.00px;font-size:14px;line-height:14px;color:#006100;font-weight:bold;-webkit-text-stroke:0.25px #006100;transform:scaleX(1.0829)">Maier</div>
<div class="t" style="left:659.00px;top:300.00px;font-size:14px;line-height:14px;color:#006100;font-weight:bold;-webkit-text-stroke:0.25px #006100;transform:scaleX(0.9931)">Auf</div>
<div class="t" style="left:687.20px;top:300.00px;font-size:14px;line-height:14px;color:#006100;font-weight:bold;-webkit-text-stroke:0.25px #006100;transform:scaleX(1.0277)">und</div>
<div class="t" style="left:717.70px;top:300.00px;font-size:14px;line-height:14px;color:#006100;font-weight:bold;-webkit-text-stroke:0.25px #006100;transform:scaleX(1.0252)">davon</div>
<div class="t" style="left:68.96px;top:321.00px;font-size:14px;line-height:14px;color:#006100;font-weight:bold;-webkit-text-stroke:0.25px #006100;transform:scaleX(0.9800)">0</div>
<div class="t" style="left:104.40px;top:321.00px;font-size:14px;line-height:14px;color:#000000;transform:scaleX(1.0118)">2,80 €</div>
<div class="t" style="left:226.70px;top:321.00px;font-size:14px;line-height:14px;color:#000000;transform:scaleX(1.0118)">3,10 €</div>
<div class="t" style="left:335.40px;top:321.00px;font-size:14px;line-height:14px;color:#000000;transform:scaleX(1.0118)">3,00 €</div>
<div class="t" style="left:68.96px;top:342.00px;font-size:14px;line-height:14px;color:#006100;font-weight:bold;-webkit-text-stroke:0.25px #006100;transform:scaleX(0.9800)">5</div>
<div class="t" style="left:104.40px;top:342.00px;font-size:14px;line-height:14px;color:#000000;transform:scaleX(1.0118)">3,20 €</div>
<div class="t" style="left:226.70px;top:342.00px;font-size:14px;line-height:14px;color:#000000;transform:scaleX(1.0118)">3,30 €</div>
<div class="t" style="left:335.40px;top:342.00px;font-size:14px;line-height:14px;color:#000000;transform:scaleX(1.0118)">3,20 €</div>
<div class="t" style="left:61.33px;top:363.00px;font-size:14px;line-height:14px;color:#006100;font-weight:bold;-webkit-text-stroke:0.25px #006100;transform:scaleX(0.9800)">10</div>
<div class="t" style="left:104.40px;top:363.00px;font-size:14px;line-height:14px;color:#000000;transform:scaleX(1.0118)">3,80 €</div>
<div class="t" style="left:226.70px;top:363.00px;font-size:14px;line-height:14px;color:#000000;transform:scaleX(1.0118)">3,50 €</div>
<div class="t" style="left:335.40px;top:363.00px;font-size:14px;line-height:14px;color:#000000;transform:scaleX(1.0118)">3,40 €</div>
<div class="t" style="left:61.33px;top:384.00px;font-size:14px;line-height:14px;color:#006100;font-weight:bold;-webkit-text-stroke:0.25px #006100;transform:scaleX(0.9800)">20</div>
<div class="t" style="left:104.40px;top:384.00px;font-size:14px;line-height:14px;color:#000000;transform:scaleX(1.0118)">4,30 €</div>
<div class="t" style="left:226.70px;top:384.00px;font-size:14px;line-height:14px;color:#000000;transform:scaleX(1.0118)">4,00 €</div>
<div class="t" style="left:335.40px;top:384.00px;font-size:14px;line-height:14px;color:#000000;transform:scaleX(1.0118)">3,90 €</div>
<div class="t" style="left:61.33px;top:405.00px;font-size:14px;line-height:14px;color:#006100;font-weight:bold;-webkit-text-stroke:0.25px #006100;transform:scaleX(0.9800)">50</div>
<div class="t" style="left:104.40px;top:405.00px;font-size:14px;line-height:14px;color:#000000;transform:scaleX(1.0118)">5,00 €</div>
<div class="t" style="left:226.70px;top:405.00px;font-size:14px;line-height:14px;color:#000000;transform:scaleX(1.0118)">4,60 €</div>
<div class="t" style="left:335.40px;top:405.00px;font-size:14px;line-height:14px;color:#000000;transform:scaleX(1.0118)">4,80 €</div>
<div class="t" style="left:53.70px;top:426.00px;font-size:14px;line-height:14px;color:#006100;font-weight:bold;-webkit-text-stroke:0.25px #006100;transform:scaleX(0.9800)">100</div>
<div class="t" style="left:104.40px;top:426.00px;font-size:14px;line-height:14px;color:#000000;transform:scaleX(1.0118)">6,50 €</div>
<div class="t" style="left:226.70px;top:426.00px;font-size:14px;line-height:14px;color:#000000;transform:scaleX(1.0118)">5,50 €</div>
<div class="t" style="left:335.40px;top:426.00px;font-size:14px;line-height:14px;color:#000000;transform:scaleX(1.0118)">6,10 €</div>
<div class="t" style="left:445.66px;top:321.00px;font-size:14px;line-height:14px;color:#006100;font-weight:bold;-webkit-text-stroke:0.25px #006100;transform:scaleX(0.9800)">0</div>
<div class="t" style="left:484.60px;top:321.00px;font-size:14px;line-height:14px;color:#000000;transform:scaleX(1.0118)">0,50 €</div>
<div class="t" style="left:606.00px;top:321.00px;font-size:14px;line-height:14px;color:#000000;transform:scaleX(1.0118)">0,60 €</div>
<div class="t" style="left:715.40px;top:321.00px;font-size:14px;line-height:14px;color:#000000;transform:scaleX(1.0118)">0,70 €</div>
<div class="t" style="left:434.22px;top:342.00px;font-size:14px;line-height:14px;color:#006100;font-weight:bold;-webkit-text-stroke:0.25px #006100;transform:scaleX(0.9800)">0,5</div>
<div class="t" style="left:484.60px;top:342.00px;font-size:14px;line-height:14px;color:#000000;transform:scaleX(1.0118)">0,70 €</div>
<div class="t" style="left:606.00px;top:342.00px;font-size:14px;line-height:14px;color:#000000;transform:scaleX(1.0118)">0,60 €</div>
<div class="t" style="left:715.40px;top:342.00px;font-size:14px;line-height:14px;color:#000000;transform:scaleX(1.0118)">0,70 €</div>
<div class="t" style="left:445.66px;top:363.00px;font-size:14px;line-height:14px;color:#006100;font-weight:bold;-webkit-text-stroke:0.25px #006100;transform:scaleX(0.9800)">1</div>
<div class="t" style="left:484.60px;top:363.00px;font-size:14px;line-height:14px;color:#000000;transform:scaleX(1.0118)">0,80 €</div>
<div class="t" style="left:606.00px;top:363.00px;font-size:14px;line-height:14px;color:#000000;transform:scaleX(1.0118)">0,70 €</div>
<div class="t" style="left:715.40px;top:363.00px;font-size:14px;line-height:14px;color:#000000;transform:scaleX(1.0118)">0,80 €</div>
<div class="t" style="left:434.22px;top:384.00px;font-size:14px;line-height:14px;color:#006100;font-weight:bold;-webkit-text-stroke:0.25px #006100;transform:scaleX(0.9800)">1,5</div>
<div class="t" style="left:484.60px;top:384.00px;font-size:14px;line-height:14px;color:#000000;transform:scaleX(1.0118)">0,90 €</div>
<div class="t" style="left:606.00px;top:384.00px;font-size:14px;line-height:14px;color:#000000;transform:scaleX(1.0118)">0,80 €</div>
<div class="t" style="left:715.40px;top:384.00px;font-size:14px;line-height:14px;color:#000000;transform:scaleX(1.0118)">0,85 €</div>
<div class="t" style="left:445.66px;top:405.00px;font-size:14px;line-height:14px;color:#006100;font-weight:bold;-webkit-text-stroke:0.25px #006100;transform:scaleX(0.9800)">2</div>
<div class="t" style="left:484.60px;top:405.00px;font-size:14px;line-height:14px;color:#000000;transform:scaleX(1.0118)">1,10 €</div>
<div class="t" style="left:606.00px;top:405.00px;font-size:14px;line-height:14px;color:#000000;transform:scaleX(1.0118)">0,90 €</div>
<div class="t" style="left:715.40px;top:405.00px;font-size:14px;line-height:14px;color:#000000;transform:scaleX(1.0118)">1,00 €</div>
<div class="t" style="left:445.66px;top:426.00px;font-size:14px;line-height:14px;color:#006100;font-weight:bold;-webkit-text-stroke:0.25px #006100;transform:scaleX(0.9800)">3</div>
<div class="t" style="left:484.60px;top:426.00px;font-size:14px;line-height:14px;color:#000000;transform:scaleX(1.0118)">1,20 €</div>
<div class="t" style="left:606.00px;top:426.00px;font-size:14px;line-height:14px;color:#000000;transform:scaleX(1.0118)">1,10 €</div>
<div class="t" style="left:715.40px;top:426.00px;font-size:14px;line-height:14px;color:#000000;transform:scaleX(1.0118)">1,10 €</div>
<div class="t" style="left:445.66px;top:447.00px;font-size:14px;line-height:14px;color:#006100;font-weight:bold;-webkit-text-stroke:0.25px #006100;transform:scaleX(0.9800)">5</div>
<div class="t" style="left:484.60px;top:447.00px;font-size:14px;line-height:14px;color:#000000;transform:scaleX(1.0118)">1,50 €</div>
<div class="t" style="left:606.00px;top:447.00px;font-size:14px;line-height:14px;color:#000000;transform:scaleX(1.0118)">1,50 €</div>
<div class="t" style="left:715.40px;top:447.00px;font-size:14px;line-height:14px;color:#000000;transform:scaleX(1.0118)">1,60 €</div>
<div class="t" style="left:29.30px;top:489.00px;font-size:14px;line-height:14px;color:#000000;-webkit-text-stroke:0.1px #000000;transform:scaleX(1.0366)">Gefahrene</div>
<div class="t" style="left:101.80px;top:489.00px;font-size:14px;line-height:14px;color:#000000;-webkit-text-stroke:0.1px #000000;transform:scaleX(0.9586)">Strecke</div>
<div class="t" style="left:152.80px;top:489.00px;font-size:14px;line-height:14px;color:#000000;-webkit-text-stroke:0.1px #000000;transform:scaleX(1.0484)">in</div>
<div class="t" style="left:168.80px;top:489.00px;font-size:14px;line-height:14px;color:#000000;-webkit-text-stroke:0.1px #000000;transform:scaleX(0.9778)">km</div>
<div class="t" style="left:29.30px;top:510.00px;font-size:14px;line-height:14px;color:#000000;-webkit-text-stroke:0.1px #000000;transform:scaleX(1.0339)">Gewicht</div>
<div class="t" style="left:86.90px;top:510.00px;font-size:14px;line-height:14px;color:#000000;-webkit-text-stroke:0.1px #000000;transform:scaleX(1.0385)">in</div>
<div class="t" style="left:102.80px;top:510.00px;font-size:14px;line-height:14px;color:#000000;-webkit-text-stroke:0.1px #000000;transform:scaleX(0.9500)">kg</div>
<div class="t" style="left:29.10px;top:531.00px;font-size:14px;line-height:14px;color:#000000;-webkit-text-stroke:0.1px #000000;transform:scaleX(1.0460)">Spedition:</div>
<div class="t" style="left:29.10px;top:552.00px;font-size:14px;line-height:14px;color:#000000;-webkit-text-stroke:0.1px #000000;transform:scaleX(1.0394)">Grundpreis:</div>
<div class="t" style="left:29.10px;top:573.00px;font-size:14px;line-height:14px;color:#000000;-webkit-text-stroke:0.1px #000000;transform:scaleX(1.0560)">Aufpreis:</div>
<div class="t" style="left:29.10px;top:594.00px;font-size:14px;line-height:14px;color:#000000;-webkit-text-stroke:0.1px #000000;transform:scaleX(1.0394)">Gesamtpreis:</div>
<div class="t" style="left:364.08px;top:489.00px;font-size:14px;line-height:14px;color:#000000;transform:scaleX(1.0118)">11</div>
<div class="t" style="left:370.91px;top:510.00px;font-size:14px;line-height:14px;color:#000000;transform:scaleX(1.0118)">7</div>
<div class="t" style="left:370.91px;top:531.00px;font-size:14px;line-height:14px;color:#000000;transform:scaleX(1.0118)">3</div>
<div class="t" style="left:335.40px;top:552.00px;font-size:14px;line-height:14px;color:#000000;transform:scaleX(1.0118)">3,50 €</div>
<div class="t" style="left:335.40px;top:573.00px;font-size:14px;line-height:14px;color:#000000;transform:scaleX(1.0118)">1,50 €</div>
<div class="t" style="left:335.40px;top:594.00px;font-size:14px;line-height:14px;color:#000000;transform:scaleX(1.0118)">5,00 €</div>
<div class="t" style="left:4.70px;top:101.00px;font-size:12px;line-height:12px;color:#444444;transform:scaleX(0.9285)">Externe Daten</div>
<div class="t" style="left:16.50px;top:117.00px;font-size:12px;line-height:12px;color:#444444;transform:scaleX(0.9969)">abrufen</div>
<div class="t" style="left:119.60px;top:103.00px;font-size:12px;line-height:12px;color:#444444;transform:scaleX(0.9409)">Neue</div>
<div class="t" style="left:108.00px;top:119.00px;font-size:12px;line-height:12px;color:#444444;transform:scaleX(1.0011)">Abfrage</div>
<div class="t" style="left:243.30px;top:103.00px;font-size:12px;line-height:12px;color:#444444;transform:scaleX(0.9638)">Alle</div>
<div class="t" style="left:216.40px;top:119.00px;font-size:12px;line-height:12px;color:#444444;transform:scaleX(0.9776)">aktualisieren</div>
<div class="t" style="left:348.40px;top:103.00px;font-size:12px;line-height:12px;color:#444444;transform:scaleX(0.9601)">Sortieren</div>
<div class="t" style="left:411.70px;top:103.00px;font-size:12px;line-height:12px;color:#444444;transform:scaleX(0.9612)">Filtern</div>
<div class="t" style="left:471.50px;top:69.00px;font-size:12px;line-height:12px;color:#a6a6a6;transform:scaleX(0.9576)">Löschen</div>
<div class="t" style="left:471.50px;top:92.00px;font-size:12px;line-height:12px;color:#a6a6a6;transform:scaleX(0.9732)">Erneut anwenden</div>
<div class="t" style="left:471.50px;top:114.50px;font-size:12px;line-height:12px;color:#444444;transform:scaleX(0.9477)">Erweitert</div>
<div class="t" style="left:584.90px;top:103.00px;font-size:12px;line-height:12px;color:#444444;transform:scaleX(0.9645)">Text in</div>
<div class="t" style="left:581.30px;top:119.00px;font-size:12px;line-height:12px;color:#444444;transform:scaleX(0.9494)">Spalten</div>
<div class="t" style="left:691.20px;top:103.00px;font-size:12px;line-height:12px;color:#444444;transform:scaleX(0.9484)">Was-wäre-wenn-</div>
<div class="t" style="left:712.40px;top:119.00px;font-size:12px;line-height:12px;color:#444444;transform:scaleX(0.9484)">Analyse</div>
<div class="t" style="left:85.30px;top:138.50px;font-size:11px;line-height:11px;color:#666666;transform:scaleX(1.0819)">Abrufen und transfor...</div>
<div class="t" style="left:227.00px;top:138.50px;font-size:11px;line-height:11px;color:#666666;transform:scaleX(1.0815)">Verbindungen</div>
<div class="t" style="left:393.50px;top:138.50px;font-size:11px;line-height:11px;color:#666666;transform:scaleX(1.0619)">Sortieren und Filtern</div>
<div class="t" style="left:602.00px;top:138.50px;font-size:11px;line-height:11px;color:#666666;transform:scaleX(1.0417)">Datentools</div>
<div class="t" style="left:752.50px;top:138.50px;font-size:11px;line-height:11px;color:#666666;transform:scaleX(1.0417)">Prognose</div>
<div class="t" style="left:13.70px;top:171.00px;font-size:12px;line-height:12px;color:#444444;transform:scaleX(0.9595)">K10</div>
<div class="t" style="left:114.20px;top:652.00px;font-size:12px;line-height:12px;color:#444444;transform:scaleX(1.0356)">SVerweis</div>
<div class="t" style="left:195.00px;top:652.00px;font-size:12px;line-height:12px;color:#444444;transform:scaleX(1.0490)">Frachtkosten 1</div>
<div class="t" style="left:309.20px;top:652.00px;font-size:12px;line-height:12px;color:#444444;transform:scaleX(1.0490)">Frachtkosten 2</div>
<div class="t" style="left:420.70px;top:653.00px;font-size:12px;line-height:12px;color:#217346;font-weight:bold;transform:scaleX(1.0410)">Frachtkosten 3</div>
<div class="t" style="left:9.30px;top:677.60px;font-size:11px;line-height:11px;color:#555555;transform:scaleX(1.0216)">Bereit</div>
</body></html>
